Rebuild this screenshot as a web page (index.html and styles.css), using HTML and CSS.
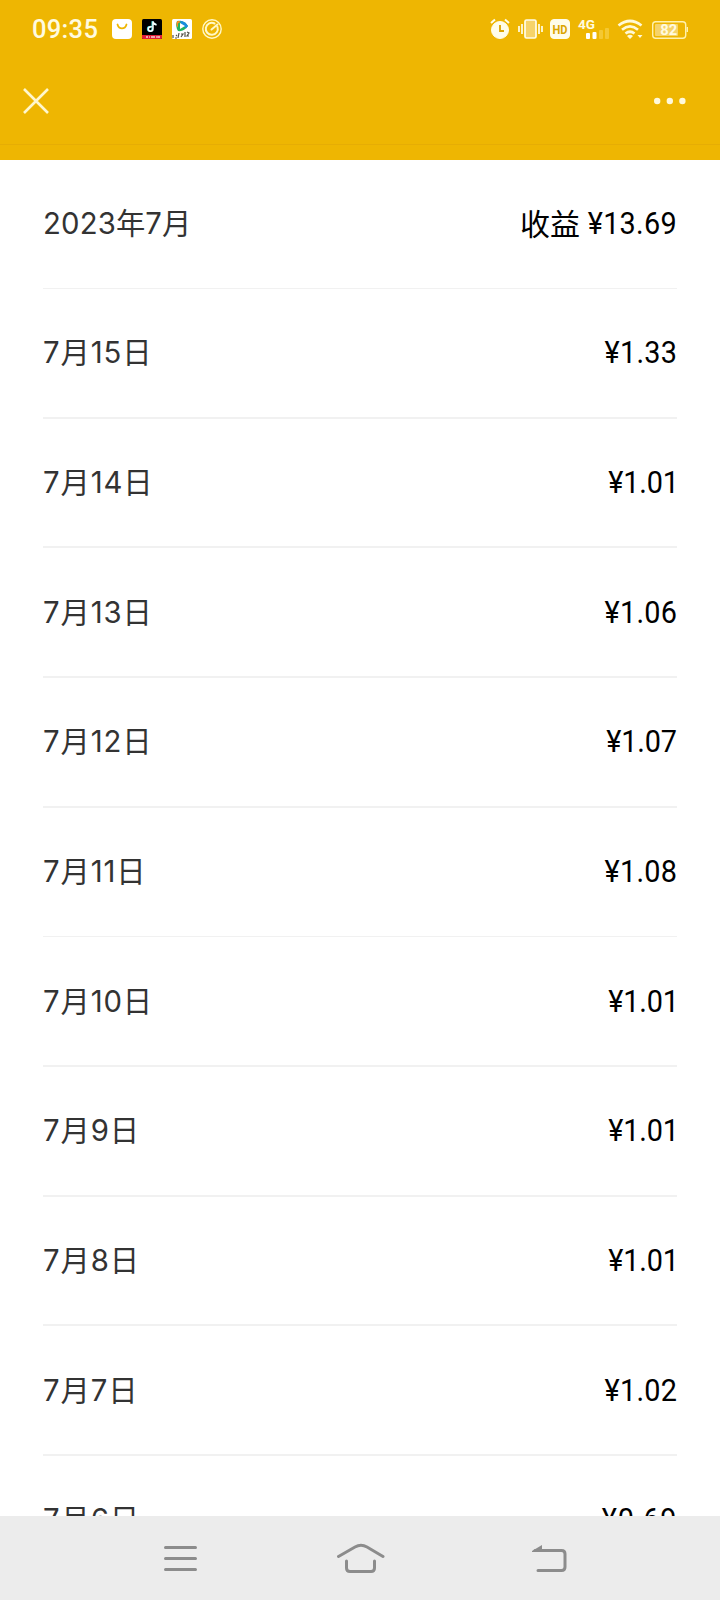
FILE: index.html
```html
<!DOCTYPE html>
<html lang="zh-CN">
<head>
<meta charset="utf-8">
<title>收益</title>
<link rel="stylesheet" href="styles.css">
</head>
<body>
<div class="screen">
  <header class="top">
    <div class="status">
      <span class="time">09:35</span>
      <svg class="notifications" width="112" height="22" viewBox="111 18 112 22">
        <rect x="112" y="19" width="20" height="20" rx="4" fill="#fff"/>
        <path d="M117.500 24.500c1.500 5.200 7.500 5.200 9 0" fill="none" stroke="#eeb602" stroke-width="1.800" stroke-linecap="round"/>
        <rect x="142" y="19" width="20" height="20" rx="1.500" fill="#000"/>
        <path d="M142 35h20v2.500q0 1.500-1.500 1.500h-17q-1.500 0-1.500-1.500z" fill="#df2039"/>
        <path d="M151.200 26.400q-3.600-.2-3.600 2.400 0 2.400 2.200 2.400 2.400 0 2.400-2.500V21.200q.8 3.200 4 3.300" fill="none" stroke="#43dce0" stroke-width="1.500"/>
        <path d="M151.800 26.800q-3.400-.2-3.400 2.200 0 2.200 2.200 2.200 2.400 0 2.400-2.500V21.500q.8 3.200 3.600 3.300" fill="none" stroke="#fff" stroke-width="1.500"/>
        <path d="M147 36v2m2-1h1m2-1v2m2-2v2m2-1h2m1-1v2" stroke="#fff" stroke-width="1.200"/>
        <rect x="172" y="19" width="20" height="20" rx="1.500" fill="#fff"/>
        <path d="M177 21q7-1 11 5-4 6-10 5-3-5-1-10z" fill="#20b45c"/>
        <path d="M176.500 24q0-3 1.500-3 2 0 3 .5l-3 2v4q-1.500-1-1.500-3.500z" fill="#ff8b20"/>
        <path d="M180 20.800q5 .5 8 5.200l-2 2.500-5-5z" fill="#168ce0"/>
        <path d="M180 23l5 3-5 3z" fill="#fff"/>
        <path d="M173 35v3m3-3l1 1m-2 2h2m2-5l-1 5m3-4h2l-2 3m4-5v5m2-5l2 1-2 3h2" fill="none" stroke="#52514a" stroke-width="1.200"/>
        <circle cx="212" cy="29" r="9.200" fill="none" stroke="#fff8c8" stroke-width="1.400"/>
        <path d="M217.500 27a6 6 0 1 1-3-3.500M211.500 29.500l6-5" fill="none" stroke="#fff8c8" stroke-width="2" stroke-linecap="round"/>
      </svg>
      <svg class="indicators" width="200" height="24" viewBox="489 17 200 24">
        <g fill="#fffde9" stroke="#fffde9">
          <circle cx="500" cy="30" r="8.500"/>
          <path d="M491 23l4-3.500M509 23l-4-3.500" stroke-width="2" fill="none"/>
          <path d="M500 25v6h4" stroke="#dba500" stroke-width="1.800" fill="none"/>
          <rect x="525" y="20" width="11" height="18" rx="1.500" fill="#f6d369" stroke-width="1.700"/>
          <path d="M519 26v6M522 24v10M539 24v10M542 26v6" stroke-width="1.700" fill="none"/>
          <rect x="550.500" y="19.500" width="19" height="19" rx="3.500"/>
        </g>
        <text class="hd" x="560" y="33.500" text-anchor="middle" textLength="15" lengthAdjust="spacingAndGlyphs">HD</text>
        <text class="network" x="578" y="29" textLength="17" lengthAdjust="spacingAndGlyphs">4G</text>
        <rect x="586" y="33" width="4" height="6" rx="1" fill="#fff"/>
        <rect x="592.500" y="32" width="4" height="7" rx="1" fill="#fff"/>
        <rect x="599" y="30" width="4" height="9" rx="1" fill="#f4c833"/>
        <rect x="605" y="28" width="4" height="11" rx="1" fill="#f4c833"/>
        <g fill="none" stroke="#fff9d7" stroke-width="2.700">
          <path d="M618.500 25.500q11.500-9 23 0"/>
          <path d="M622 29.700q8-6.500 16 0"/>
          <path d="M625.500 33.500q4.500-3.500 9 0"/>
        </g>
        <path d="M627 36q3-2.500 6 0l-3 3zM637.500 35h5l-2.500 3z" fill="#fff9d7"/>
        <rect x="652.700" y="21.700" width="33" height="16.600" rx="3" fill="none" stroke="#fff2af" stroke-width="1.400"/>
        <rect x="655" y="24" width="23" height="12" rx="1" fill="#f6d369"/>
        <path d="M687.300 27v5" stroke="#fff2af" stroke-width="1.400"/>
        <text class="battery" x="668.800" y="35.200" text-anchor="middle" textLength="17" lengthAdjust="spacingAndGlyphs">82</text>
      </svg>
    </div>
    <nav class="title-bar">
      <svg width="26" height="26" viewBox="0 0 26 26"><path d="M1 1l24 24M25 1L1 25" stroke="#fff7ce" stroke-width="2.600"/></svg>
      <svg width="32" height="8" viewBox="0 0 32 8" fill="#fff9dc"><circle cx="3.200" cy="4" r="3.200"/><circle cx="15.800" cy="4" r="3.200"/><circle cx="28.400" cy="4" r="3.200"/></svg>
    </nav>
  </header>
  <main class="list">
    <div class="row summary"><span class="date">2023年7月</span><span class="total"><span class="label">收益</span><span class="amount">¥13.69</span></span></div>
    <div class="row"><span class="date">7月15日</span><span class="amount">¥1.33</span></div>
    <div class="row"><span class="date">7月14日</span><span class="amount ends-one">¥1.01</span></div>
    <div class="row"><span class="date">7月13日</span><span class="amount">¥1.06</span></div>
    <div class="row"><span class="date">7月12日</span><span class="amount ends-seven">¥1.07</span></div>
    <div class="row thin"><span class="date">7月11日</span><span class="amount">¥1.08</span></div>
    <div class="row"><span class="date">7月10日</span><span class="amount ends-one">¥1.01</span></div>
    <div class="row"><span class="date">7月9日</span><span class="amount ends-one">¥1.01</span></div>
    <div class="row"><span class="date">7月8日</span><span class="amount ends-one">¥1.01</span></div>
    <div class="row"><span class="date">7月7日</span><span class="amount">¥1.02</span></div>
    <div class="row"><span class="date">7月6日</span><span class="amount wide">¥0.69</span></div>
  </main>
  <footer class="system-nav">
    <svg width="34" height="28" viewBox="0 -2 34 28"><path d="M1.500 1.500h30M1.500 12.500h30M1.500 23.500h30"/></svg>
    <svg class="home" width="48" height="30" viewBox="0 0 48 30"><path d="M1.500 13.500L18 4q6-3.500 12 0l16 9.500M9.500 18v7q0 3.500 3.500 3.500h21q3.500 0 3.500-3.500v-7"/></svg>
    <svg width="36" height="28" viewBox="0 0 36 28"><path d="M4 6.500h26.500q3.500 0 3.500 3.500v13q0 3.500-3.500 3.500H7"/><path class="arrow" d="M1 7L11 1v7H1z"/></svg>
  </footer>
</div>
</body>
</html>
```
FILE: styles.css
```css
* { box-sizing: border-box; }
body { margin: 0; background: #fff; }
svg { display: block; flex: none; }
.screen {
  width: 720px;
  height: 1600px;
  display: grid;
  grid-template-rows: 160px 1356px 84px;
  overflow: hidden;
}
.top {
  background: linear-gradient(#e6ad04, #e6ad04) 0 144px / 100% 1px no-repeat #eeb602;
}
.status {
  height: 58px;
  display: flex;
  align-items: center;
  padding: 0 31px;
}
.time {
  width: 80px;
  padding-left: 1px;
  color: #fffbe0;
  font: 500 25.5px/30px Roboto, sans-serif;
  letter-spacing: 0.3px;
}
.indicators { margin-left: auto; }
.indicators text { font-family: Roboto, sans-serif; font-weight: 700; }
.hd { font-size: 12.5px; fill: #dba500; }
.network { font-size: 13.5px; fill: #fffbe0; }
.battery { font-size: 14px; fill: #fffbe0; }
.title-bar {
  height: 86px;
  display: flex;
  align-items: center;
  justify-content: space-between;
  padding: 0 34px 0 22.5px;
}
.list {
  overflow: hidden;
  padding: 0 43px;
}
.row {
  height: 129.68px;
  display: flex;
  align-items: center;
  justify-content: space-between;
  border-bottom: 2px solid #f1f1f1;
  padding-top: 1px;
  white-space: nowrap;
}
.thin { border-bottom-width: 1px; padding-top: 0; }
.summary { height: 129px; border-bottom-width: 1px; padding-top: 0; }
.date {
  color: #333;
  font: 29.3px/40px Inter, "Noto Sans CJK SC", sans-serif;
  letter-spacing: 0.9px;
}
.summary .date { letter-spacing: 0.15px; }
.total { display: flex; align-items: center; }
.amount {
  color: #000;
  font: 31px/40px Roboto, sans-serif;
  letter-spacing: 0.3px;
  transform: scaleX(0.93);
  transform-origin: right center;
}
.ends-one { margin-right: -1.8px; letter-spacing: -0.2px; }
.ends-seven { letter-spacing: -0.2px; }
.wide { letter-spacing: 0.9px; }
.label {
  color: #000;
  font: 30px/40px "Noto Sans CJK SC", sans-serif;
  margin-right: 1px;
  padding-bottom: 5px;
}
.system-nav {
  background: #ececec;
  display: flex;
  align-items: center;
  justify-content: space-between;
  padding: 0 153px 0 164px;
}
.system-nav .home { margin-right: 7px; }
.system-nav path {
  fill: none;
  stroke: #8c8c8c;
  stroke-width: 3;
  stroke-linecap: round;
  stroke-linejoin: round;
}
.system-nav .arrow { fill: #8c8c8c; stroke: none; }
```
